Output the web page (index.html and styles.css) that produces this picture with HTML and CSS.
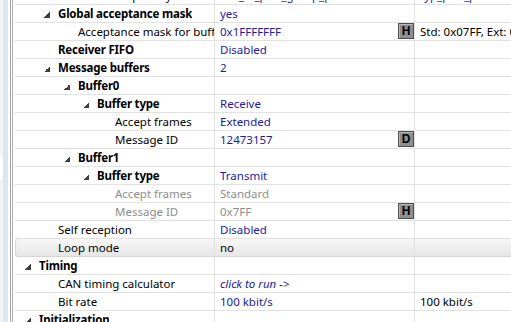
FILE: index.html
```html
<!doctype html>
<html>
<head>
	<meta charset="utf-8">
	<title>CAN properties</title>
	<link rel="stylesheet" href="styles.css">
</head>
<body>
	<div id="frame">
		<div class="edge"><span class="tab"></span></div>
		<div class="rail"></div>
		<div class="sash"></div>
		<div class="sash"></div>
		<div id="sheet">
			<div class="row">
				<div class="key l1"><i class="tw"></i><span>Transmission priority</span></div>
				<div class="val">can_tx_prio_group_p</div>
				<div class="ext val">typ_prio_p</div>
			</div>
			<div class="row">
				<div class="key l1 b"><i class="tw open"></i><span>Global acceptance mask</span></div>
				<div class="val">yes</div>
				<div class="ext"></div>
			</div>
			<div class="row">
				<div class="key l2"><i class="tw"></i><span>Acceptance mask for buffers</span></div>
				<div class="val"><span class="txt">0x1FFFFFFF</span><b class="btn">H</b></div>
				<div class="ext">Std: 0x07FF, Ext: 0x1FFFFFFF</div>
			</div>
			<div class="row">
				<div class="key l1 b"><i class="tw"></i><span>Receiver FIFO</span></div>
				<div class="val">Disabled</div>
				<div class="ext"></div>
			</div>
			<div class="row">
				<div class="key l1 b"><i class="tw open"></i><span>Message buffers</span></div>
				<div class="val">2</div>
				<div class="ext"></div>
			</div>
			<div class="row">
				<div class="key l2 b"><i class="tw open"></i><span>Buffer0</span></div>
				<div class="val"></div>
				<div class="ext"></div>
			</div>
			<div class="row">
				<div class="key l3 b"><i class="tw open"></i><span>Buffer type</span></div>
				<div class="val">Receive</div>
				<div class="ext"></div>
			</div>
			<div class="row">
				<div class="key l4"><i class="tw"></i><span>Accept frames</span></div>
				<div class="val">Extended</div>
				<div class="ext"></div>
			</div>
			<div class="row">
				<div class="key l4"><i class="tw"></i><span>Message ID</span></div>
				<div class="val"><span class="txt">12473157</span><b class="btn">D</b></div>
				<div class="ext"></div>
			</div>
			<div class="row">
				<div class="key l2 b"><i class="tw open"></i><span>Buffer1</span></div>
				<div class="val"></div>
				<div class="ext"></div>
			</div>
			<div class="row">
				<div class="key l3 b"><i class="tw open"></i><span>Buffer type</span></div>
				<div class="val">Transmit</div>
				<div class="ext"></div>
			</div>
			<div class="row off">
				<div class="key l4"><i class="tw"></i><span>Accept frames</span></div>
				<div class="val">Standard</div>
				<div class="ext"></div>
			</div>
			<div class="row off">
				<div class="key l4"><i class="tw"></i><span>Message ID</span></div>
				<div class="val"><span class="txt">0x7FF</span><b class="btn">H</b></div>
				<div class="ext"></div>
			</div>
			<div class="row">
				<div class="key l1"><i class="tw"></i><span>Self reception</span></div>
				<div class="val">Disabled</div>
				<div class="ext"></div>
			</div>
			<div class="row hot">
				<div class="key l1"><i class="tw"></i><span>Loop mode</span></div>
				<div class="val plain">no</div>
				<div class="ext"></div>
			</div>
			<div class="row">
				<div class="key l0 b"><i class="tw open"></i><span>Timing</span></div>
				<div class="val"></div>
				<div class="ext"></div>
			</div>
			<div class="row">
				<div class="key l1"><i class="tw"></i><span>CAN timing calculator</span></div>
				<div class="val link">click to run -&gt;</div>
				<div class="ext"></div>
			</div>
			<div class="row">
				<div class="key l1"><i class="tw"></i><span>Bit rate</span></div>
				<div class="val">100 kbit/s</div>
				<div class="ext">100 kbit/s</div>
			</div>
			<div class="row">
				<div class="key l0 b"><i class="tw open"></i><span>Initialization</span></div>
				<div class="val"></div>
				<div class="ext"></div>
			</div>
		</div>
	</div>
</body>
</html>
```

FILE: styles.css
```css
html, body {
	margin: 0;
	background: #fff;
}
#frame {
	display: flex;
	height: 322px;
	overflow: hidden;
	font-family: "Noto Sans", sans-serif;
	font-size: 11.5px;
	color: #000;
}
.edge {
	width: 3px;
	background: #f3f3f3;
	padding-top: 155px;
}
.tab {
	display: block;
	height: 25px;
	background: #fff;
	border-radius: 0 3px 3px 0;
}
.rail {
	width: 5px;
	background: #dde4f4;
	margin-right: 2px;
}
.sash {
	width: 1px;
	background: #a3a3a3;
	margin-right: 1px;
}
.sash + .sash {
	background: #b0b0b0;
	margin-right: 2px;
}

#sheet {
	flex: 1;
	margin-top: -13px;
}
.row {
	display: grid;
	grid-template-columns: 200px 200px 1fr;
	height: 18px;
	box-sizing: border-box;
	border-bottom: 1px solid #e2e2e2;
	line-height: 17px;
}
.row > div {
	border-right: 1px solid #e2e2e2;
	white-space: nowrap;
	overflow: hidden;
}
.key {
	display: flex;
	align-items: center;
	gap: 8px;
}
.key span {
	overflow: hidden;
}
.b span {
	font-weight: bold;
	letter-spacing: -0.2px;
}
.l0 { padding-left: 10px; }
.l1 { padding-left: 29px; }
.l2 { padding-left: 49px; }
.l3 { padding-left: 68px; }
.l4 { padding-left: 86px; }

.tw {
	flex: none;
	width: 6px;
	height: 6px;
	margin-top: 3px;
}
.tw.open {
	background: linear-gradient(135deg, transparent 50%, #3e3e3e 50%);
}

.val {
	display: flex;
	padding-left: 5px;
	color: #221a9c;
}
.ext {
	padding-left: 5px;
}
.row .ext {
	border-right: none;
}
.plain {
	color: #000;
}
.link {
	font-style: italic;
}
.off .key span,
.off .val {
	color: #8e8e8e;
}
.btn {
	margin-left: auto;
	width: 16px;
	height: 16px;
	box-sizing: border-box;
	border: 1px solid #4e4e4e;
	background: #8f8f8f;
	box-shadow: inset 1px 1px #b5b5b5;
	font: bold 12px/14px "Liberation Sans", sans-serif;
	color: #000;
	text-align: center;
}
.hot {
	background: linear-gradient(#f7f7f7, #e6e6e6);
	border-bottom-color: #d6d6d6;
	border-radius: 3px 0 0 3px;
	box-shadow: inset 1px 0 #d6d6d6;
}
```
